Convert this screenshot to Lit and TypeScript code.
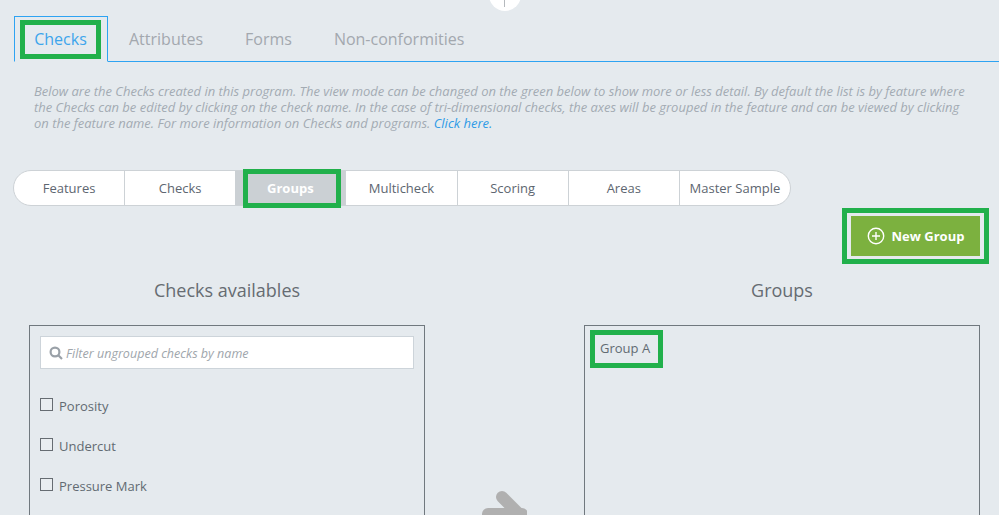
import { LitElement, html, css } from "lit";
import { customElement } from "lit/decorators.js";

const SEGMENTS = ["Features", "Checks", "Groups", "Multicheck", "Scoring", "Areas", "Master Sample"];
const CHECKS = ["Porosity", "Undercut", "Pressure Mark"];

@customElement("app-root")
export class AppRoot extends LitElement {
  static styles = css`
    :host { display: block; width: 999px; height: 517px; background: #fff; overflow: hidden; font-family: "Open Sans", sans-serif; }
    .page { position: relative; height: 515px; overflow: hidden; background: #e5eaee; padding-top: 16px; box-sizing: border-box; }
    .knob { position: absolute; left: 489px; top: -21px; width: 32px; height: 32px; border-radius: 50%; background: #fff; }
    .knob::after { content: ""; position: absolute; left: 15px; top: 21px; width: 1px; height: 7px; background: #b5b9bd; }
    .tabs { display: flex; margin-left: 14px; height: 46px; box-sizing: border-box; border-bottom: 1px solid #2ea3f2; font-size: 16px; color: #a3a8ae; }
    .tab { padding: 12px 21px 0; line-height: 22px; }
    .tab.active { padding: 3px 5px 0; height: 46px; width: 94px; box-sizing: border-box; border: 1px solid #2ea3f2; border-bottom: 1px solid #e5eaee; color: #3da5ec; }
    .tab.active span { display: block; width: 81px; height: 39px; border: 5px solid #21b04b; text-align: center; line-height: 29px; box-sizing: border-box; }
    .intro { margin: 21px 24px 0 34px; font-size: 12.97px; line-height: 16px; font-style: italic; color: #a3abb3; }
    .intro a { color: #2e9be6; }
    .seg { display: flex; margin: 39px 0 0 13px; width: 778px; height: 36px; box-sizing: border-box; border: 1px solid #cdd2d6; border-radius: 18px; background: #fff; font-size: 13px; color: #5d6670; }
    .seg div { position: relative; flex: 1; display: flex; align-items: center; justify-content: center; border-left: 1px solid #cdd2d6; }
    .seg div:first-child { border-left: 0; border-radius: 18px 0 0 18px; }
    .seg div:last-child { border-radius: 0 18px 18px 0; }
    .seg div.on { background: #cbd0d4; color: #fff; font-weight: 700; border-left: 0; }
    .seg div.on::after { content: ""; position: absolute; left: 8px; right: 4px; top: -2px; bottom: -3px; border: 5px solid #21b04b; }
    .actions { display: flex; justify-content: flex-end; padding-right: 10px; margin-top: 2px; }
    .btn-mark { border: 5px solid #21b04b; padding: 3px 4px; background: #e5eaee; }
    .btn { display: flex; align-items: center; justify-content: center; gap: 7px; width: 129px; height: 40px; background: #7cb13f; color: #fff; font-size: 13px; font-weight: 700; }
    .cols { display: flex; margin-top: 14px; }
    .col { width: 396px; }
    .col.left { margin-left: 29px; }
    .col.right { margin-left: 159px; }
    h2 { margin: 0 0 23px; height: 24px; font-size: 18px; line-height: 24px; font-weight: 400; color: #666c72; text-align: center; }
    .box { border: 1px solid #70787e; height: 300px; box-sizing: border-box; padding: 10px; }
    .search { display: flex; align-items: center; gap: 3px; width: 374px; height: 33px; box-sizing: border-box; padding: 1px 0 0 8px; background: #fff; border: 1px solid #cdd4da; font-size: 12.55px; font-style: italic; color: #a0a6ac; }
    .list { margin-top: 17px; }
    .item { display: flex; align-items: center; gap: 6px; height: 40px; font-size: 13px; color: #626a72; }
    .item i { display: block; width: 13px; height: 13px; border: 1px solid #666c72; box-sizing: border-box; margin-top: -4px; background: #e9edf0; }
    .group { display: inline-block; margin: -7px 0 0 -5px; padding: 4px 5px; width: 73px; border: 5px solid #21b04b; font-size: 13px; line-height: 18px; color: #626a72; height: 38px; box-sizing: border-box; white-space: nowrap; }
    .arrow { position: absolute; left: 481px; top: 488px; }
  `;

  render() {
    return html`
      <div class="page">
        <div class="knob"></div>
        <div class="tabs">
          <div class="tab active"><span>Checks</span></div>
          <div class="tab">Attributes</div>
          <div class="tab">Forms</div>
          <div class="tab">Non-conformities</div>
        </div>
        <p class="intro">Below are the Checks created in this program. The view mode can be changed on the green below to show more or less detail. By default the list is by feature where the Checks can be edited by clicking on the check name. In the case of tri-dimensional checks, the axes will be grouped in the feature and can be viewed by clicking on the feature name. For more information on Checks and programs. <a>Click here.</a></p>
        <div class="seg">
          ${SEGMENTS.map((s) => html`<div class=${s === "Groups" ? "on" : ""}>${s}</div>`)}
        </div>
        <div class="actions">
          <div class="btn-mark">
            <div class="btn">
              <svg width="18" height="18" viewBox="0 0 18 18" fill="none" stroke="#fff" stroke-width="1.4"><circle cx="9" cy="9" r="7.7"/><path d="M9 5v8M5 9h8"/></svg>
              New Group
            </div>
          </div>
        </div>
        <div class="cols">
          <section class="col left">
            <h2>Checks availables</h2>
            <div class="box">
              <div class="search">
                <svg width="14" height="14" viewBox="0 0 14 14" fill="none" stroke="#9aa1a8" stroke-width="2.2"><circle cx="6" cy="6" r="4.4"/><path d="M9.3 9.3l3.7 3.7"/></svg>
                Filter ungrouped checks by name
              </div>
              <div class="list">
                ${CHECKS.map((c) => html`<div class="item"><i></i>${c}</div>`)}
              </div>
            </div>
          </section>
          <section class="col right">
            <h2>Groups</h2>
            <div class="box"><div class="group">Group A</div></div>
          </section>
        </div>
        <svg class="arrow" width="46" height="40" viewBox="0 0 46 40" fill="none" stroke="#b0b0b0" stroke-width="12" stroke-linecap="round"><path d="M7 26h34M21 9l22 22"/></svg>
      </div>
    `;
  }
}
